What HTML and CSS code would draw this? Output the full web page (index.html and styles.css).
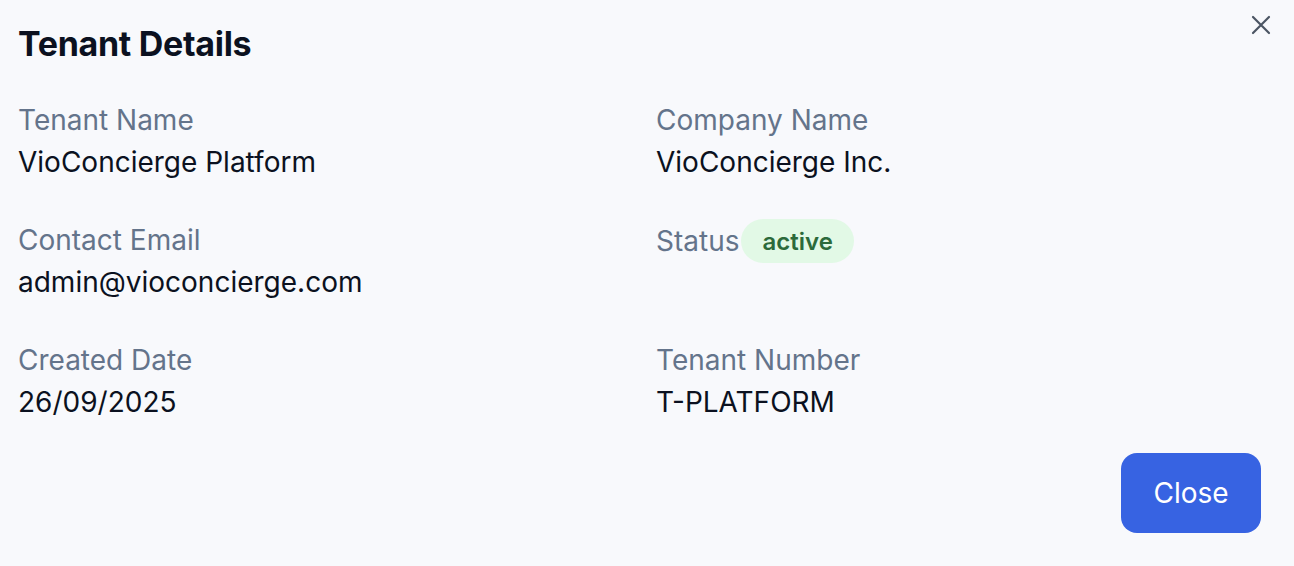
FILE: index.html
```html
<!DOCTYPE html>
<html lang="en">
<head>
<meta charset="utf-8">
<title>Tenant Details</title>
<link rel="stylesheet" href="styles.css">
</head>
<body>
<div class="dialog">
  <h2 class="title">Tenant Details</h2>
  <button class="close-x" aria-label="Close">
    <svg width="20" height="20" viewBox="0 0 20 20" fill="none" stroke="currentColor" stroke-width="2.2" stroke-linecap="round">
      <path d="M2 2 L18 18 M18 2 L2 18"/>
    </svg>
  </button>
  <div class="grid">
    <div class="field">
      <div class="label">Tenant Name</div>
      <div class="value">VioConcierge Platform</div>
    </div>
    <div class="field">
      <div class="label">Company Name</div>
      <div class="value">VioConcierge Inc.</div>
    </div>
    <div class="field">
      <div class="label">Contact Email</div>
      <div class="value">admin@vioconcierge.com</div>
    </div>
    <div class="field">
      <div class="label-row">
        <span class="label">Status</span>
        <span class="badge">active</span>
      </div>
    </div>
    <div class="field">
      <div class="label">Created Date</div>
      <div class="value">26/09/2025</div>
    </div>
    <div class="field">
      <div class="label">Tenant Number</div>
      <div class="value">T-PLATFORM</div>
    </div>
  </div>
  <div class="footer">
    <button class="btn">Close</button>
  </div>
</div>
</body>
</html>
```

FILE: styles.css
```css
* { box-sizing: border-box; }
html, body {
  margin: 0;
  padding: 0;
  background: #f8f9fc;
  font-family: Inter, "Noto Sans", sans-serif;
}
.dialog {
  position: relative;
  width: 1294px;
  height: 566px;
  padding: 24px 33px 33px 18px;
  display: flex;
  flex-direction: column;
}
.title {
  margin: 0;
  font-size: 34px;
  line-height: 40px;
  font-weight: 700;
  color: #0b1120;
  letter-spacing: -0.3px;
}
.close-x {
  position: absolute;
  top: 15px;
  right: 23px;
  width: 20px;
  height: 20px;
  padding: 0;
  border: none;
  background: none;
  color: #4b5563;
  display: flex;
}
.grid {
  margin-top: 35px;
  display: grid;
  grid-template-columns: 1fr 1fr;
  column-gap: 33px;
  row-gap: 36px;
}
.field {
  display: flex;
  flex-direction: column;
}
.label {
  font-size: 28px;
  line-height: 42px;
  color: #64748b;
}
.value {
  font-size: 28px;
  line-height: 42px;
  color: #0b1120;
}
.label-row {
  display: flex;
  align-items: center;
  gap: 2px;
}
.badge {
  height: 44px;
  padding: 0 21px;
  border-radius: 22px;
  background: #e2f9e6;
  color: #2c6a3b;
  font-size: 24px;
  font-weight: 600;
  display: flex;
  align-items: center;
}
.footer {
  margin-top: auto;
  display: flex;
  justify-content: flex-end;
}
.btn {
  width: 140px;
  height: 80px;
  border: none;
  border-radius: 16px;
  background: #3763e2;
  color: #ffffff;
  font-family: Inter, "Noto Sans", sans-serif;
  font-size: 28px;
}
```
